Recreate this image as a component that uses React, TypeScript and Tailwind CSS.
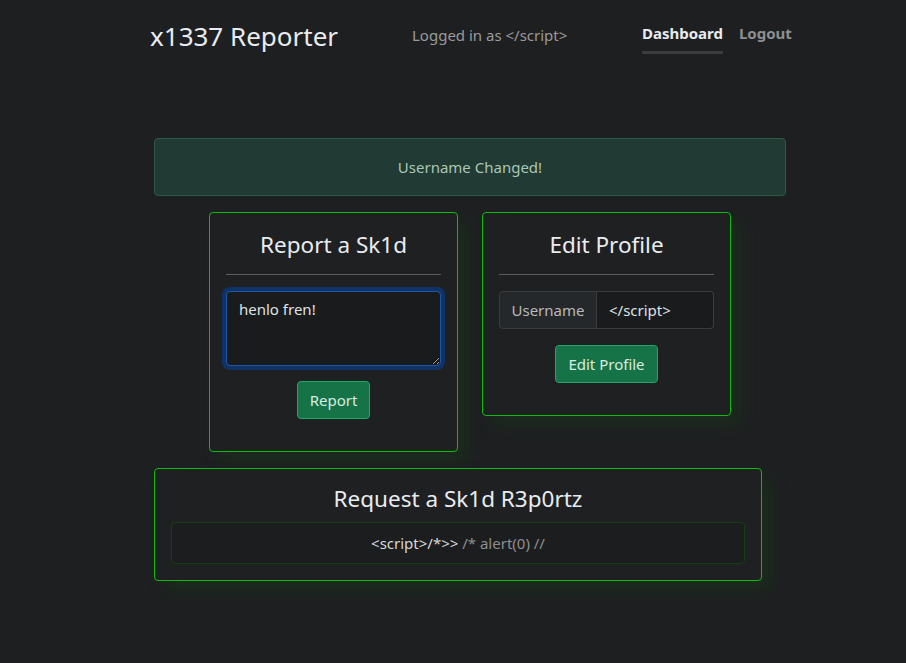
export default function App() {
  return (
    <div className="min-h-[663px] bg-[#1e1f21] text-[#dee2e6]" style={{ fontFamily: '"Noto Sans", "Open Sans", sans-serif' }}>
      {/* Header */}
      <header className="flex items-center pl-[150px] pt-[13px] h-[58px]">
        <h1 className="text-[26px] leading-none text-[#e9ecef] w-[262px]">x1337 Reporter</h1>
        <span className="text-[15px] text-[#9a9a9a] w-[230px] -mt-[1px]">Logged in as &lt;/script&gt;</span>
        <nav className="flex gap-4 text-[15px] font-bold mt-[5px]">
          <a className="text-[#e9ecef] border-b-[3px] border-[#3a3c3f] pb-[6px]">Dashboard</a>
          <a className="text-[#8d8f92] border-b-[3px] border-transparent pb-[6px]">Logout</a>
        </nav>
      </header>

      <main className="ml-[154px] w-[632px] pt-[80px]">
        <div className="h-[58px] flex items-center justify-center rounded-[4px] border border-[#2a5a43] bg-[#213a33] text-[15px] text-[#a9c7b6]">
          Username Changed!
        </div>

        <div className="flex items-start gap-6 ml-[55px] mt-[16px]">
          {/* Report card */}
          <section className="w-[249px] h-[240px] rounded-[4px] border border-[#0dba0d] bg-[#1f2022] px-4 pt-[17px] shadow-[10px_10px_18px_rgba(0,140,0,0.12)]">
            <h2 className="text-center text-[22.5px] text-[#e9ecef] leading-[30px]">Report a Sk1d</h2>
            <hr className="mt-[14px] border-[#5a5c5f]" />
            <textarea
              defaultValue="henlo fren!"
              className="mt-[16px] block w-full h-[75px] rounded-[4px] border border-[#1c57a8] ring-4 ring-[#0f3366] bg-[#1a1b1d] px-3 pt-[6px] text-[15px] text-[#dee2e6] outline-none resize-y"
            />
            <div className="flex justify-center mt-[15px]">
              <button className="h-[38px] px-3 rounded-[4px] border border-[#25a36a] bg-[#157347] text-[15px] text-[#d8ece0]">Report</button>
            </div>
          </section>

          {/* Edit profile card */}
          <section className="w-[249px] h-[204px] rounded-[4px] border border-[#0dba0d] bg-[#1f2022] px-4 pt-[17px] shadow-[10px_10px_18px_rgba(0,140,0,0.12)]">
            <h2 className="text-center text-[22.5px] text-[#e9ecef] leading-[30px]">Edit Profile</h2>
            <hr className="mt-[14px] border-[#5a5c5f]" />
            <div className="mt-[16px] flex h-[38px] text-[15px]">
              <span className="w-[98px] flex items-center justify-center rounded-l-[4px] border border-[#3a3c3f] bg-[#25282b] text-[#b6b9bc]">Username</span>
              <input
                defaultValue="</script>"
                className="w-0 flex-1 rounded-r-[4px] border border-l-0 border-[#3a3c3f] bg-[#1a1b1d] px-3 text-[#dee2e6] outline-none"
              />
            </div>
            <div className="flex justify-center mt-[16px]">
              <button className="h-[38px] px-3 rounded-[4px] border border-[#25a36a] bg-[#157347] text-[15px] text-[#d8ece0]">Edit Profile</button>
            </div>
          </section>
        </div>

        {/* Request card */}
        <section className="mt-[16px] w-[608px] h-[113px] rounded-[4px] border border-[#0dba0d] bg-[#1f2022] px-4 pt-[15px] shadow-[10px_10px_18px_rgba(0,140,0,0.12)]">
          <h2 className="text-center text-[22.5px] text-[#e9ecef] leading-[30px]">Request a Sk1d R3p0rtz</h2>
          <div className="mt-[8px] h-[42px] flex items-center justify-center rounded-[4px] border border-[#173d17] bg-[#1c1d1f] text-[15px]">
            <span className="text-[#d6d8da]">&lt;script&gt;/*&gt;&gt;</span>
            <span className="text-[#8c8e90]">&nbsp;/* alert(0) //</span>
          </div>
        </section>
      </main>
    </div>
  );
}
